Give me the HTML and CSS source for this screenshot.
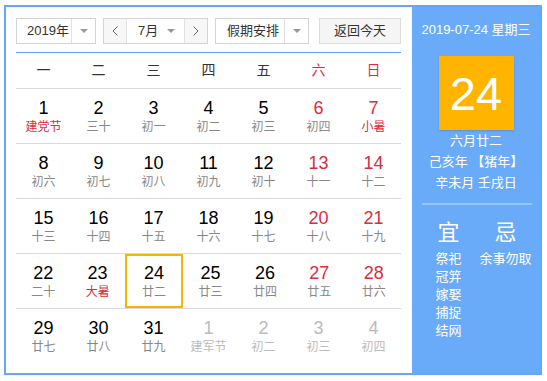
FILE: index.html
```html
<!DOCTYPE html>
<html>
  <head>
    <meta charset="utf-8">
    <title>万年历</title>
    <link rel="stylesheet" href="styles.css">
  </head>
  <body>
    <div class="calendar">
      <div class="cal-left">
        <div class="cal-head">
          <div class="sel sel-year">
            <span class="sel-text">2019年</span>
            <span class="sel-arrow"><i></i></span>
          </div>
          <div class="month-box">
            <span class="month-btn">
              <svg width="6" height="10" viewBox="0 0 6 10"><polyline points="5.5,0.5 1,5 5.5,9.5" fill="none" stroke="#666" stroke-width="1"/></svg>
            </span>
            <span class="month-text"><span>7月</span><i></i></span>
            <span class="month-btn">
              <svg width="6" height="10" viewBox="0 0 6 10"><polyline points="0.5,0.5 5,5 0.5,9.5" fill="none" stroke="#666" stroke-width="1"/></svg>
            </span>
          </div>
          <div class="sel sel-holiday">
            <span class="sel-text">假期安排</span>
            <span class="sel-arrow"><i></i></span>
          </div>
          <div class="btn-today">返回今天</div>
        </div>

        <div class="week-row">
          <span>一</span><span>二</span><span>三</span><span>四</span><span>五</span>
          <span class="red">六</span><span class="red">日</span>
        </div>

        <div class="day-row">
          <div class="day"><b>1</b><em class="red">建党节</em></div>
          <div class="day"><b>2</b><em>三十</em></div>
          <div class="day"><b>3</b><em>初一</em></div>
          <div class="day"><b>4</b><em>初二</em></div>
          <div class="day"><b>5</b><em>初三</em></div>
          <div class="day weekend"><b>6</b><em>初四</em></div>
          <div class="day weekend"><b>7</b><em class="red">小暑</em></div>
        </div>
        <div class="day-row">
          <div class="day"><b>8</b><em>初六</em></div>
          <div class="day"><b>9</b><em>初七</em></div>
          <div class="day"><b>10</b><em>初八</em></div>
          <div class="day"><b>11</b><em>初九</em></div>
          <div class="day"><b>12</b><em>初十</em></div>
          <div class="day weekend"><b>13</b><em>十一</em></div>
          <div class="day weekend"><b>14</b><em>十二</em></div>
        </div>
        <div class="day-row">
          <div class="day"><b>15</b><em>十三</em></div>
          <div class="day"><b>16</b><em>十四</em></div>
          <div class="day"><b>17</b><em>十五</em></div>
          <div class="day"><b>18</b><em>十六</em></div>
          <div class="day"><b>19</b><em>十七</em></div>
          <div class="day weekend"><b>20</b><em>十八</em></div>
          <div class="day weekend"><b>21</b><em>十九</em></div>
        </div>
        <div class="day-row">
          <div class="day"><b>22</b><em>二十</em></div>
          <div class="day"><b>23</b><em class="red">大暑</em></div>
          <div class="day today"><b>24</b><em>廿二</em></div>
          <div class="day"><b>25</b><em>廿三</em></div>
          <div class="day"><b>26</b><em>廿四</em></div>
          <div class="day weekend"><b>27</b><em>廿五</em></div>
          <div class="day weekend"><b>28</b><em>廿六</em></div>
        </div>
        <div class="day-row last">
          <div class="day"><b>29</b><em>廿七</em></div>
          <div class="day"><b>30</b><em>廿八</em></div>
          <div class="day"><b>31</b><em>廿九</em></div>
          <div class="day other"><b>1</b><em>建军节</em></div>
          <div class="day other"><b>2</b><em>初二</em></div>
          <div class="day other"><b>3</b><em>初三</em></div>
          <div class="day other"><b>4</b><em>初四</em></div>
        </div>
      </div>

      <div class="cal-right">
        <p class="r-date">2019-07-24 星期三</p>
        <div class="r-day">24</div>
        <p class="r-lunar">六月廿二</p>
        <p class="r-lunar">己亥年 【猪年】</p>
        <p class="r-lunar">辛未月 壬戌日</p>
        <div class="r-line"></div>
        <div class="r-yiji">
          <div class="r-col">
            <h3>宜</h3>
            <p>祭祀</p>
            <p>冠笄</p>
            <p>嫁娶</p>
            <p>捕捉</p>
            <p>结网</p>
          </div>
          <div class="r-col">
            <h3>忌</h3>
            <p>余事勿取</p>
          </div>
        </div>
      </div>
    </div>
  </body>
</html>
```

FILE: styles.css
```css
*{
  margin: 0;
  padding: 0;
}
body{
  background: #fff;
  font-family: "Liberation Sans", "Noto Sans CJK SC", sans-serif;
  color: #333;
}
.calendar{
  display: flex;
  width: 538px;
  height: 370px;
  margin: 5px 0 0 4px;
  border: 2px solid #62a8f4;
  box-sizing: border-box;
}

/* left part */
.cal-left{
  width: 385px;
  padding: 11px 11px 0 10px;
}
.cal-head{
  display: flex;
  height: 26px;
  padding-bottom: 8px;
  border-bottom: 1px solid #62a8f4;
}
.sel{
  display: flex;
  height: 26px;
  border: 1px solid #d4d4d4;
  box-sizing: border-box;
  font-size: 13px;
  line-height: 24px;
  background: #fff;
}
.sel-text{
  padding-left: 10px;
  box-sizing: border-box;
  border-right: 1px solid #e2e2e2;
}
.sel-arrow{
  display: flex;
  align-items: center;
  justify-content: center;
  width: 23px;
}
.sel-arrow i,
.month-text i{
  display: block;
  width: 0;
  height: 0;
  border-left: 4px solid transparent;
  border-right: 4px solid transparent;
  border-top: 4px solid #999;
}
.sel-year{
  width: 80px;
}
.sel-year .sel-text{
  width: 56px;
}
.month-box{
  display: flex;
  width: 105px;
  height: 26px;
  margin-left: 7px;
  border: 1px solid #d4d4d4;
  box-sizing: border-box;
  font-size: 13px;
  line-height: 24px;
}
.month-btn{
  display: flex;
  align-items: center;
  justify-content: center;
  width: 22px;
  background: #f7f7f7;
}
.month-text{
  display: flex;
  align-items: center;
  width: 59px;
  padding-left: 11px;
  box-sizing: border-box;
  border-left: 1px solid #e2e2e2;
  border-right: 1px solid #e2e2e2;
  white-space: nowrap;
}
.month-text i{
  margin-left: auto;
  margin-right: 9px;
}
.sel-holiday{
  width: 94px;
  margin-left: 7px;
}
.sel-holiday .sel-text{
  width: 70px;
  padding-left: 11px;
}
.btn-today{
  width: 82px;
  height: 26px;
  margin-left: 10px;
  border: 1px solid #dcdcdc;
  box-sizing: border-box;
  background: #f5f5f5;
  font-size: 13px;
  line-height: 24px;
  text-align: center;
}

.week-row{
  display: flex;
  height: 35px;
  border-bottom: 1px solid #dadada;
  font-size: 14px;
  line-height: 35px;
}
.week-row span{
  flex: 1;
  text-align: center;
}
.red{
  color: #dd2b3b;
}

.day-row{
  display: flex;
  height: 54px;
  border-bottom: 1px solid #dadada;
}
.day-row.last{
  border-bottom: none;
}
.day{
  flex: 1;
  padding-top: 8px;
  text-align: center;
}
.day b{
  display: block;
  font-weight: normal;
  font-size: 18px;
  line-height: 22px;
  color: #000;
}
.day em{
  display: block;
  font-style: normal;
  font-size: 12px;
  line-height: 16px;
  color: #888;
}
.day em.red{
  color: #dd2b3b;
}
.day.weekend b{
  color: #dd2b3b;
}
.day.other b,
.day.other em{
  color: #bbb;
}
.day.today{
  border: 2px solid #f7b500;
  padding-top: 6px;
}

/* right part */
.cal-right{
  width: 128px;
  background: #6aabf9;
  color: #fff;
  text-align: center;
}
.r-date{
  margin-top: 13px;
  font-size: 13px;
  line-height: 20px;
}
.r-day{
  width: 75px;
  height: 74px;
  margin: 16px auto 0;
  background: #ffb400;
  box-shadow: 0 1px 2px rgba(0,0,0,.15);
  font-size: 47px;
  line-height: 76px;
}
.r-lunar{
  font-size: 13px;
  line-height: 21px;
}
.r-lunar:first-of-type{
  margin-top: 8px;
}
.r-line{
  height: 2px;
  margin: 10px 8px 0 10px;
  background: rgba(255,255,255,.3);
}
.r-yiji{
  display: flex;
  padding-left: 8px;
  margin-top: 15px;
}
.r-col{
  width: 57px;
}
.r-col h3{
  font-weight: normal;
  font-size: 22px;
  line-height: 26px;
  margin-bottom: 4px;
}
.r-col p{
  font-size: 13px;
  line-height: 18px;
}
```
